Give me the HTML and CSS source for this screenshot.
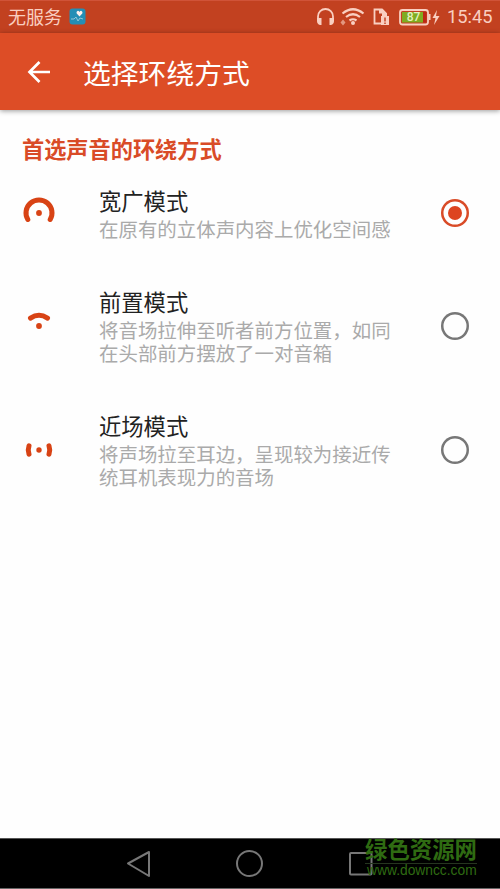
FILE: index.html
```html
<!DOCTYPE html>
<html lang="zh-CN">
<head>
<meta charset="utf-8">
<title>选择环绕方式</title>
<link rel="stylesheet" href="styles.css">
</head>
<body>
<div class="screen">
  <header class="status">
    <span class="carrier">无服务</span>
    <svg class="app-icon" width="17" height="17" viewBox="0 0 17 17"><rect x=".5" y=".5" width="16" height="16" rx="3" fill="#248eb5"/><path d="M10.500 8.500 7.700 5.500q-.8-2 .8-2.600 1.200-.3 2 1 .8-1.300 2-1 1.600.6.8 2.600z" fill="#fff0ed"/><path d="M2 11h3l2-2 2 4 2-3 3 1" fill="none" stroke="#8fc6d8"/></svg>
    <svg class="status-icons" width="134" height="24" viewBox="313 6 134 24">
      <g fill="none" stroke="#f9cfc1" stroke-width="1.800">
        <path d="M318 21v-4.500a7.500 7.500 0 0 1 15 0V21"/>
        <path d="M342.500 13.500q10.500-8.500 21 0M346 17q7-5.500 14 0M349.500 20.500q3.500-2.500 7 0" stroke-width="2.200"/>
        <path d="M381 23.500h-6.500v-14h7.500l4 4v3"/>
        <rect x="400" y="10" width="28" height="14.500" rx="2.500"/>
      </g>
      <g fill="#f9cfc1">
        <path d="M317 18h4.500v7H320q-3-1-3-4zM334 18h-4.500v7h1.500q3-1 3-4z"/>
        <circle cx="353" cy="23" r="2"/>
        <path d="m340.500 22.500 2.500-3 2.500 3-2.500 3z" opacity=".6"/>
        <path d="M379 9h3.500l4.500 4.500v3h-5v-3h-3zM381 16h8v9h-8z"/>
        <rect x="428.500" y="14" width="2" height="6"/>
        <path d="m437 10-4.500 8h3l-1.500 7 5.500-9H436z"/>
      </g>
      <path d="M385 17.500v4M385 22.500v1.500" stroke="#c44525" stroke-width="1.500"/>
      <rect x="402" y="12" width="21" height="10.500" fill="#7fac21"/>
      <rect x="423" y="12" width="3.500" height="10.500" fill="#bd2814"/>
      <text class="battery" x="413.500" y="21.300" text-anchor="middle">87</text>
    </svg>
    <span class="clock">15:45</span>
  </header>
  <div class="appbar">
    <svg class="back" width="24" height="24" viewBox="0 0 24 24"><path d="M12.500 2 2.500 12l10 10M3 12h20" fill="none" stroke="#fff" stroke-width="2.700"/></svg>
    <h1>选择环绕方式</h1>
  </div>
  <main>
    <h2>首选声音的环绕方式</h2>
    <div class="option">
      <svg class="mode" width="34" height="34" viewBox="-17 -17 34 34"><path d="M-11.200 6.500A13 13 0 1 1 11.200 6.500" fill="none" stroke="#d84315" stroke-width="5" stroke-linecap="round"/><circle r="2.900"/></svg>
      <div class="text"><h3>宽广模式</h3><p>在原有的立体声内容上优化空间感</p></div>
      <span class="radio checked"></span>
    </div>
    <div class="option">
      <svg class="mode" width="34" height="34" viewBox="-17 -17 34 34"><path d="M-8.500-7.900Q0-13.500 8.500-7.900" fill="none" stroke="#d84315" stroke-width="5" stroke-linecap="round"/><circle r="2.900"/></svg>
      <div class="text"><h3>前置模式</h3><p>将音场拉伸至听者前方位置，如同<br>在头部前方摆放了一对音箱</p></div>
      <span class="radio"></span>
    </div>
    <div class="option">
      <svg class="mode" width="34" height="34" viewBox="-17 -17 34 34"><path d="M-10-4.200Q-11.500 0-10 4.200M10-4.200Q11.500 0 10 4.200" fill="none" stroke="#d84315" stroke-width="5" stroke-linecap="round"/><circle r="2.700"/></svg>
      <div class="text"><h3>近场模式</h3><p>将声场拉至耳边，呈现较为接近传<br>统耳机表现力的音场</p></div>
      <span class="radio"></span>
    </div>
  </main>
  <nav>
    <svg width="500" height="49" viewBox="0 839 500 49" fill="none" stroke="#777" stroke-width="2">
      <path d="M149 852v24l-21-12.500z" stroke-linejoin="round"/>
      <circle cx="249.500" cy="863.500" r="12.500"/>
      <rect x="350" y="853" width="21.500" height="21.500" rx="1"/>
    </svg>
    <div class="watermark"><b>绿色资源网</b><span>www.downcc.com</span></div>
  </nav>
</div>
</body>
</html>
```
FILE: styles.css
```css
* { box-sizing: border-box; }
body {
  margin: 0;
  background: #fefefe;
  font-family: Roboto, "Noto Sans CJK SC", sans-serif;
}
h1, h2, h3, p { margin: 0; font-weight: 400; white-space: nowrap; }
.screen { width: 500px; height: 889px; display: flex; flex-direction: column; overflow: hidden; }
.status {
  flex: none;
  height: 33px;
  display: flex;
  align-items: center;
  padding: 1px 8px 0 8px;
  background: #c24120;
  border-top: 1px solid #d05338;
  color: #f9cfc1;
}
.carrier { font-size: 18px; line-height: 24px; width: 61px; }
.app-icon { margin-top: -2px; }
.status-icons { margin-left: auto; flex: none; }
.battery { font: 500 12px Roboto, sans-serif; fill: #e5f2c0; }
.clock { font-size: 18.3px; line-height: 22px; padding-bottom: 2px; width: 45px; white-space: nowrap; }
.appbar {
  flex: none;
  height: 77px;
  display: flex;
  align-items: center;
  padding-left: 27px;
  background: #dd4d26;
  color: #fff;
  box-shadow: 0 1px 5px rgba(0, 0, 0, .4);
}
.back { margin-right: 32px; }
h1 { font-size: 27.8px; line-height: 40px; padding-top: 6px; }
main { flex: 1; padding: 24px 31px 0 22px; }
h2 { font-size: 22.2px; line-height: 32px; font-weight: 700; color: #d94b27; margin-bottom: 18px; }
.option { display: flex; align-items: center; margin-bottom: 43px; }
.mode { margin-right: 43px; fill: #d84315; flex: none; }
.text { flex: 1; padding-top: 3px; }
h3 { font-size: 22.3px; line-height: 30px; margin-bottom: 2px; color: #222; }
p { font-size: 19.45px; line-height: 23px; color: #aaa; }
.radio {
  flex: none;
  display: grid;
  place-items: center;
  width: 28px;
  height: 28px;
  box-shadow: inset 0 0 0 2.5px #777;
  border-radius: 50%;
}
.checked { box-shadow: inset 0 0 0 2.5px #d94b27; }
.checked::after { content: ""; width: 14px; height: 14px; border-radius: 50%; background: #dd4420; }
nav { flex: none; position: relative; height: 51px; background: #000; border-top: 1px solid #555; border-bottom: 1px solid #666; }
nav svg { display: block; }
.watermark {
  position: absolute;
  left: 365px;
  top: 0;
  color: #2f6b12;
  white-space: nowrap;
}
.watermark b { display: block; font-size: 22.4px; line-height: 22px; height: 25px; border-bottom: 1px solid #26351f; }
.watermark span { display: block; padding-left: 2px; font: 13.8px/14px "Liberation Sans", sans-serif; }
```
